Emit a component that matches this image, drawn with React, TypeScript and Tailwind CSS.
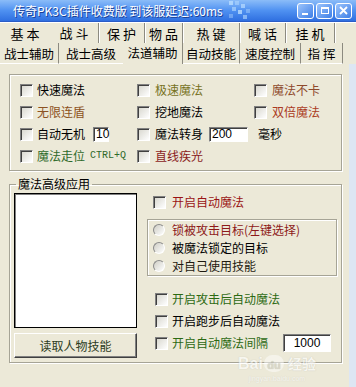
import React from "react";

function Check({ label, color, gap }: { label: string; color: string; gap: string }) {
  return (
    <div className="flex items-center h-[22px] whitespace-nowrap">
      <span className="w-[13px] h-[13px] shrink-0 bg-linear-to-br from-[#d6d5cc] to-white border border-t-[#808080] border-l-[#808080] border-r-white border-b-white shadow-[inset_1px_1px_0_#404040]" />
      <span className={`${gap} ${color}`}>{label}</span>
    </div>
  );
}

function Radio({ label, color }: { label: string; color: string }) {
  return (
    <div className="flex items-center h-[18px] whitespace-nowrap">
      <span className="w-[12px] h-[12px] shrink-0 rounded-full bg-linear-to-br from-[#cfcec5] to-white border border-t-[#8a8a8a] border-l-[#8a8a8a] border-r-white border-b-white" />
      <span className={`ml-[7px] ${color}`}>{label}</span>
    </div>
  );
}

export default function App() {
  return (
    <div className="relative w-[356px] h-[387px] overflow-hidden bg-[#ece9d8] flex flex-col font-['Noto_Sans_CJK_SC','Noto_Sans',sans-serif] text-[12px] leading-[14px] text-black">
      {/* Title bar */}
      <div className="h-[22px] shrink-0 flex items-center bg-linear-to-b from-[#8bbcf8] via-[#4f91f1] to-[#2f6fe0] border-b border-[#2a5cc6]">
        <span className="ml-[13px] text-white text-[12px] leading-[14px] [text-shadow:1px_1px_0_#1b3f94] whitespace-nowrap">
          传奇PK3C插件收费版 到该服延迟:60ms
        </span>
        <svg width="26" height="21" viewBox="0 0 26 21" className="ml-[4px] shrink-0">
          <rect x="2" y="1" width="4" height="4" fill="#b8dcff" opacity="0.8" />
          <rect x="8" y="1" width="4" height="4" fill="#b8dcff" opacity="0.5" />
          <rect x="14" y="4" width="4" height="4" fill="#b8dcff" opacity="0.7" />
          <rect x="5" y="7" width="4" height="4" fill="#b8dcff" opacity="0.6" />
          <rect x="11" y="10" width="4" height="4" fill="#b8dcff" opacity="0.8" />
          <rect x="19" y="9" width="4" height="4" fill="#b8dcff" opacity="0.4" />
          <rect x="2" y="14" width="4" height="4" fill="#b8dcff" opacity="0.4" />
          <rect x="16" y="15" width="4" height="4" fill="#b8dcff" opacity="0.6" />
        </svg>
        <div className="flex-1" />
        <div className="flex gap-[2px] mr-[4px]">
          <div className="w-[17px] h-[16px] rounded-[3px] border border-white bg-linear-to-br from-[#9cc4fb] to-[#3d7ee6] flex items-end justify-start pl-[4px] pb-[3px]">
            <span className="w-[6px] h-[2px] bg-white" />
          </div>
          <div className="w-[17px] h-[16px] rounded-[3px] border border-white bg-linear-to-br from-[#9cc4fb] to-[#3d7ee6] flex items-center justify-center">
            <span className="w-[8px] h-[7px] border border-white border-t-2" />
          </div>
          <div className="w-[17px] h-[16px] rounded-[3px] border border-white bg-linear-to-br from-[#9cc4fb] to-[#3d7ee6] flex items-center justify-center">
            <svg width="9" height="9" viewBox="0 0 9 9">
              <path d="M1 1 L8 8 M8 1 L1 8" stroke="white" strokeWidth="1.8" />
            </svg>
          </div>
        </div>
      </div>

      {/* Tab row 1 */}
      <div className="h-[21px] shrink-0 flex border-t border-white text-[13px] leading-[15px] whitespace-nowrap">
        <div className="w-[50px] flex items-center justify-center">基 本</div>
        <div className="w-[49px] flex items-center justify-center pb-[2px] border-r border-r-[#8c8a80] shadow-[1px_0_0_#fff]">战 斗</div>
        <div className="w-[46px] flex items-center justify-center border-r border-r-[#8c8a80] shadow-[1px_0_0_#fff]">保 护</div>
        <div className="w-[38px] flex items-center justify-center border-r border-r-[#8c8a80] shadow-[1px_0_0_#fff]">物 品</div>
        <div className="w-[57px] flex items-center justify-center border-r border-r-[#8c8a80] shadow-[1px_0_0_#fff]">热 键</div>
        <div className="w-[46px] flex items-center justify-center border-r border-r-[#8c8a80] shadow-[1px_0_0_#fff]">喊 话</div>
        <div className="w-[49px] flex items-center justify-center border-r border-r-[#8c8a80] shadow-[1px_0_0_#fff]">挂 机</div>
      </div>

      {/* Tab row 2 */}
      <div className="h-[21px] shrink-0 flex text-[12.5px] leading-[15px] whitespace-nowrap">
        <div className="w-[59px] flex items-center justify-center border-r border-r-[#8c8a80] border-b border-b-white">战士辅助</div>
        <div className="w-[64px] flex items-center justify-center border-b border-b-white">战士高级</div>
        <div className="w-[60px] flex items-center justify-center pb-[2px] border-r border-r-[#8c8a80]">法道辅助</div>
        <div className="w-[57px] flex items-center justify-center border-r border-r-[#8c8a80] border-b border-b-white">自动技能</div>
        <div className="w-[61px] flex items-center justify-center border-r border-r-[#8c8a80] border-b border-b-white">速度控制</div>
        <div className="w-[42px] flex items-center justify-center border-r border-r-[#8c8a80] border-b border-b-white">指 挥</div>
      </div>

      {/* Page */}
      <div className="flex-1 flex">
        <div className="w-[349px] pt-[10px] pl-[9px]">
          {/* Group 1 */}
          <div className="w-[333px] h-[97px] border border-[#a6a496] shadow-[1px_1px_0_#fff,inset_1px_1px_0_#fff] pl-[10px] pt-[4px] grid grid-cols-[117px_117px_97px] auto-rows-[22px]">
            <Check label="快速魔法" color="text-black" gap="ml-[4px]" />
            <Check label="极速魔法" color="text-[#77721e]" gap="ml-[5px]" />
            <Check label="魔法不卡" color="text-[#8e4a2c]" gap="ml-[5px]" />

            <Check label="无限连盾" color="text-[#8c5222]" gap="ml-[4px]" />
            <Check label="挖地魔法" color="text-black" gap="ml-[5px]" />
            <Check label="双倍魔法" color="text-[#ab3b22]" gap="ml-[5px]" />

            <div className="flex items-center h-[22px] whitespace-nowrap">
              <span className="w-[13px] h-[13px] shrink-0 bg-linear-to-br from-[#d6d5cc] to-white border border-t-[#808080] border-l-[#808080] border-r-white border-b-white shadow-[inset_1px_1px_0_#404040]" />
              <span className="ml-[4px]">自动无机</span>
              <span className="ml-[8px] w-[16px] h-[15px] bg-white border border-t-[#808080] border-l-[#808080] border-r-white border-b-white shadow-[inset_1px_1px_0_#404040] font-['Liberation_Sans',sans-serif] text-[12px] leading-[13px] pl-[2px]">10</span>
            </div>
            <div className="col-span-2 flex items-center h-[22px] whitespace-nowrap">
              <span className="w-[13px] h-[13px] shrink-0 bg-linear-to-br from-[#d6d5cc] to-white border border-t-[#808080] border-l-[#808080] border-r-white border-b-white shadow-[inset_1px_1px_0_#404040]" />
              <span className="ml-[5px]">魔法转身</span>
              <span className="ml-[6px] w-[39px] h-[15px] bg-white border border-t-[#808080] border-l-[#808080] border-r-white border-b-white shadow-[inset_1px_1px_0_#404040] font-['Liberation_Sans',sans-serif] text-[12px] leading-[13px] pl-[2px]">200</span>
              <span className="ml-[10px]">毫秒</span>
            </div>

            <div className="flex items-center h-[22px] whitespace-nowrap">
              <span className="w-[13px] h-[13px] shrink-0 bg-linear-to-br from-[#d6d5cc] to-white border border-t-[#808080] border-l-[#808080] border-r-white border-b-white shadow-[inset_1px_1px_0_#404040]" />
              <span className="ml-[4px] text-[#2f6a2a]">魔法走位</span>
              <span className="ml-[5px] text-[#2f6a2a] font-['Liberation_Mono',monospace] text-[10px]">CTRL+Q</span>
            </div>
            <Check label="直线疾光" color="text-[#8a1c1c]" gap="ml-[5px]" />
          </div>

          {/* Group 2 */}
          <fieldset className="mt-[6px] w-[333px] border border-[#a6a496] shadow-[1px_1px_0_#fff,inset_1px_1px_0_#fff]">
            <legend className="ml-[6px] px-[2px] text-[12px] leading-[14px]">魔法高级应用</legend>
            <div className="flex pl-[4px] pt-[2px] pb-[4px]">
              <div className="w-[123px] flex flex-col">
                <div className="h-[135px] bg-white border border-black shadow-[inset_1px_1px_0_#808080]" />
                <div className="mt-[5px] h-[25px] flex items-center justify-center bg-[#ece9d8] border border-t-white border-l-white border-r-[#404040] border-b-[#404040] shadow-[inset_-1px_-1px_0_#808080] text-[#2d3c1e]">
                  读取人物技能
                </div>
              </div>
              <div className="ml-[10px] w-[190px] flex flex-col">
                <div className="pl-[6px] flex items-center h-[18px] whitespace-nowrap">
                  <span className="w-[13px] h-[13px] shrink-0 bg-linear-to-br from-[#d6d5cc] to-white border border-t-[#808080] border-l-[#808080] border-r-white border-b-white shadow-[inset_1px_1px_0_#404040]" />
                  <span className="ml-[6px] text-[#9a1414]">开启自动魔法</span>
                </div>
                <div className="mt-[8px] border border-[#a6a496] shadow-[1px_1px_0_#fff,inset_1px_1px_0_#fff] pl-[5px] pt-[1px]">
                  <Radio label="锁被攻击目标(左键选择)" color="text-[#8e1a1a]" />
                  <Radio label="被魔法锁定的目标" color="text-black" />
                  <Radio label="对自己使用技能" color="text-[#1e1a10]" />
                </div>
                <div className="mt-[12px] pl-[8px] flex flex-col">
                  <Check label="开启攻击后自动魔法" color="text-[#2c6a12]" gap="ml-[4px]" />
                  <Check label="开启跑步后自动魔法" color="text-black" gap="ml-[4px]" />
                  <div className="flex items-center h-[22px] whitespace-nowrap">
                    <span className="w-[13px] h-[13px] shrink-0 bg-linear-to-br from-[#d6d5cc] to-white border border-t-[#808080] border-l-[#808080] border-r-white border-b-white shadow-[inset_1px_1px_0_#404040]" />
                    <span className="ml-[4px] text-[#2c6a12]">开启自动魔法间隔</span>
                    <span className="ml-[15px] w-[48px] h-[18px] flex items-center justify-center bg-white border border-t-[#808080] border-l-[#808080] border-r-white border-b-white shadow-[inset_1px_1px_0_#404040] font-['Liberation_Sans',sans-serif] text-[12px]">1000</span>
                  </div>
                </div>
              </div>
            </div>
          </fieldset>
        </div>
        <div className="flex-1 bg-[#dde6f3]" />
      </div>

      {/* Baidu watermark */}
      <div className="absolute left-[238px] top-[355px] flex flex-col items-center pointer-events-none opacity-60">
        <div className="flex items-end font-['Liberation_Sans',sans-serif] font-bold text-[16px] leading-[17px] text-white [text-shadow:0_0_1px_#a8a79c]">
          <span>Bai</span>
          <span className="ml-[1px] w-[20px] h-[17px] rounded-full bg-white/80 text-[#cfcdc0] text-[11px] leading-[13px] flex items-end justify-center">du</span>
          <span className="ml-[4px] font-['Noto_Sans_CJK_SC',sans-serif] text-[14px] leading-[17px]">经验</span>
        </div>
        <span className="mt-[3px] text-[7px] leading-[8px] text-white [text-shadow:0_0_1px_#bdbbb0] font-['Liberation_Sans',sans-serif]">jingyan.baidu.com</span>
      </div>
    </div>
  );
}
